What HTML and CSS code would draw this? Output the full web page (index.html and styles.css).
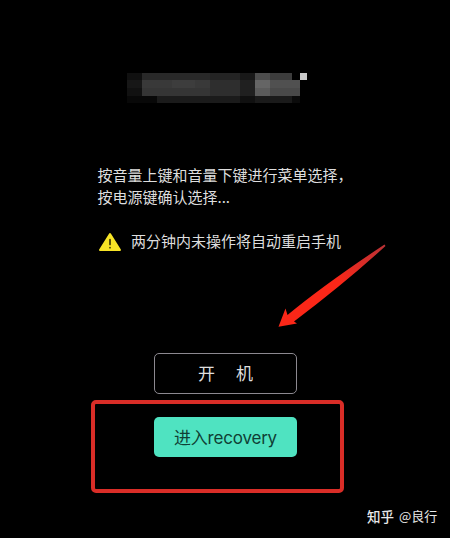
FILE: index.html
```html
<!DOCTYPE html>
<html lang="zh-CN">
<head>
<meta charset="utf-8">
<title>开机菜单</title>
<link rel="stylesheet" href="styles.css">
</head>
<body>
<main class="screen">
  <svg class="mosaic" width="180" height="30" viewBox="127 73 180 30" shape-rendering="crispEdges" aria-hidden="true">
    <path fill="#101010" d="M127 73h15v7h-15z"/>
    <path fill="#171717" d="M127 80h15v8h-15z"/>
    <path fill="#111" d="M127 88h15v8h-15z"/>
    <path fill="#080808" d="M127 96h30v7h-30z"/>
    <path fill="#292929" d="M142 73h68v7h-68z"/>
    <path fill="#393939" d="M142 80h68v8h-68z"/>
    <path fill="#353535" d="M142 88h68v8h-68z"/>
    <path fill="#3d3d3d" d="M172 80h23v8h-23z"/>
    <path fill="#1b1b1b" d="M157 96h83v7h-83z"/>
    <path fill="#242424" d="M210 73h30v7h-30z"/>
    <path fill="#2e2e2e" d="M210 80h30v16h-30z"/>
    <path fill="#181818" d="M240 73h15v7h-15z"/>
    <path fill="#202020" d="M240 80h15v16h-15z"/>
    <path fill="#101010" d="M240 96h15v7h-15z"/>
    <path fill="#4d4d4d" d="M255 73h15v7h-15z"/>
    <path fill="#656565" d="M255 80h15v8h-15z"/>
    <path fill="#5b5b5b" d="M255 88h15v8h-15z"/>
    <path fill="#3c3c3c" d="M270 73h22v7h-22z"/>
    <path fill="#505050" d="M270 80h30v8h-30z"/>
    <path fill="#494949" d="M270 88h30v8h-30z"/>
    <path fill="#1a1a1a" d="M255 96h37v7h-37z"/>
    <path fill="#0b0b0b" d="M292 96h8v7h-8z"/>
    <path fill="#c9c9c9" d="M300 73h7v7h-7z"/>
  </svg>
  <p class="hint">按音量上键和音量下键进行菜单选择，<br>按电源键确认选择...</p>
  <div class="warning">
    <svg class="warning-icon" width="24" height="20" viewBox="0 0 24 20" aria-hidden="true">
      <path fill="#f7e426" stroke="#f7e426" stroke-width="2" stroke-linejoin="round" d="M12 2 22 18H2Z"/>
      <path stroke="#3b3508" stroke-width="1.7" stroke-linecap="round" d="M12 7.500v5M12 15.6v.1"/>
    </svg>
    <span>两分钟内未操作将自动重启手机</span>
  </div>
  <div class="button boot"><span>开</span><span>机</span></div>
  <div class="highlight">
    <div class="button recovery">进入recovery</div>
  </div>
  <footer class="credit"><span class="site">知乎</span><span>@良行</span></footer>
  <svg class="arrow" width="110" height="86" viewBox="277 243 110 86" aria-hidden="true">
    <defs>
      <linearGradient id="shaft" x1="0" y1="1" x2="1" y2="0">
        <stop offset=".55" stop-color="#fb2718"/>
        <stop offset="1" stop-color="#b83236"/>
      </linearGradient>
    </defs>
    <path fill="url(#shaft)" d="M278.500 326.800 285.500 308.500 287.500 315Q325 284 384.500 244.500L385.500 246Q345 283 294 321.500L297 323.500Z"/>
  </svg>
</main>
</body>
</html>
```
FILE: styles.css
```css
* {
  box-sizing: border-box;
}

body {
  margin: 0;
  background: #000;
  color: #dedede;
  font-family: "Noto Sans CJK SC", sans-serif;
}

.screen {
  position: relative;
  display: flex;
  flex-direction: column;
  width: 450px;
  height: 538px;
  padding-top: 73px;
  overflow: hidden;
}

.mosaic {
  display: block;
  flex: none;
  margin-left: 127px;
}

.hint {
  margin: 61px 0 0 97.5px;
  font-size: 15px;
  line-height: 22px;
  white-space: nowrap;
}

.warning {
  display: flex;
  align-items: center;
  gap: 9px;
  height: 22px;
  margin: 22px 0 0 98px;
  font-size: 15px;
  line-height: 22px;
  white-space: nowrap;
}

.warning-icon {
  margin-top: 1px;
}

.button {
  display: flex;
  align-items: center;
  justify-content: center;
  flex: none;
  width: 143px;
  border-radius: 5px;
}

.boot {
  gap: 21px;
  height: 41px;
  margin: 101px 0 0 154px;
  padding-bottom: 2px;
  border: 1px solid #8c8990;
  font-size: 17px;
}

.highlight {
  flex: none;
  width: 253px;
  height: 93px;
  margin: 6px 0 0 91px;
  padding: 13px 0 0 59px;
  border: 4px solid #d92d27;
  border-radius: 5px;
}

.recovery {
  height: 40px;
  padding-bottom: 2px;
  background: #4fe3c1;
  color: #103f35;
  font-family: Inter, "Noto Sans CJK SC", sans-serif;
  font-size: 17px;
  letter-spacing: -0.2px;
}

.credit {
  display: flex;
  gap: 5px;
  margin: 13px 0 0 367px;
  color: #e8e8e8;
  font-size: 13px;
  line-height: 20px;
  white-space: nowrap;
}

.site {
  font-size: 13.5px;
  font-weight: 500;
}

.arrow {
  position: absolute;
  left: 277px;
  top: 243px;
}
```
